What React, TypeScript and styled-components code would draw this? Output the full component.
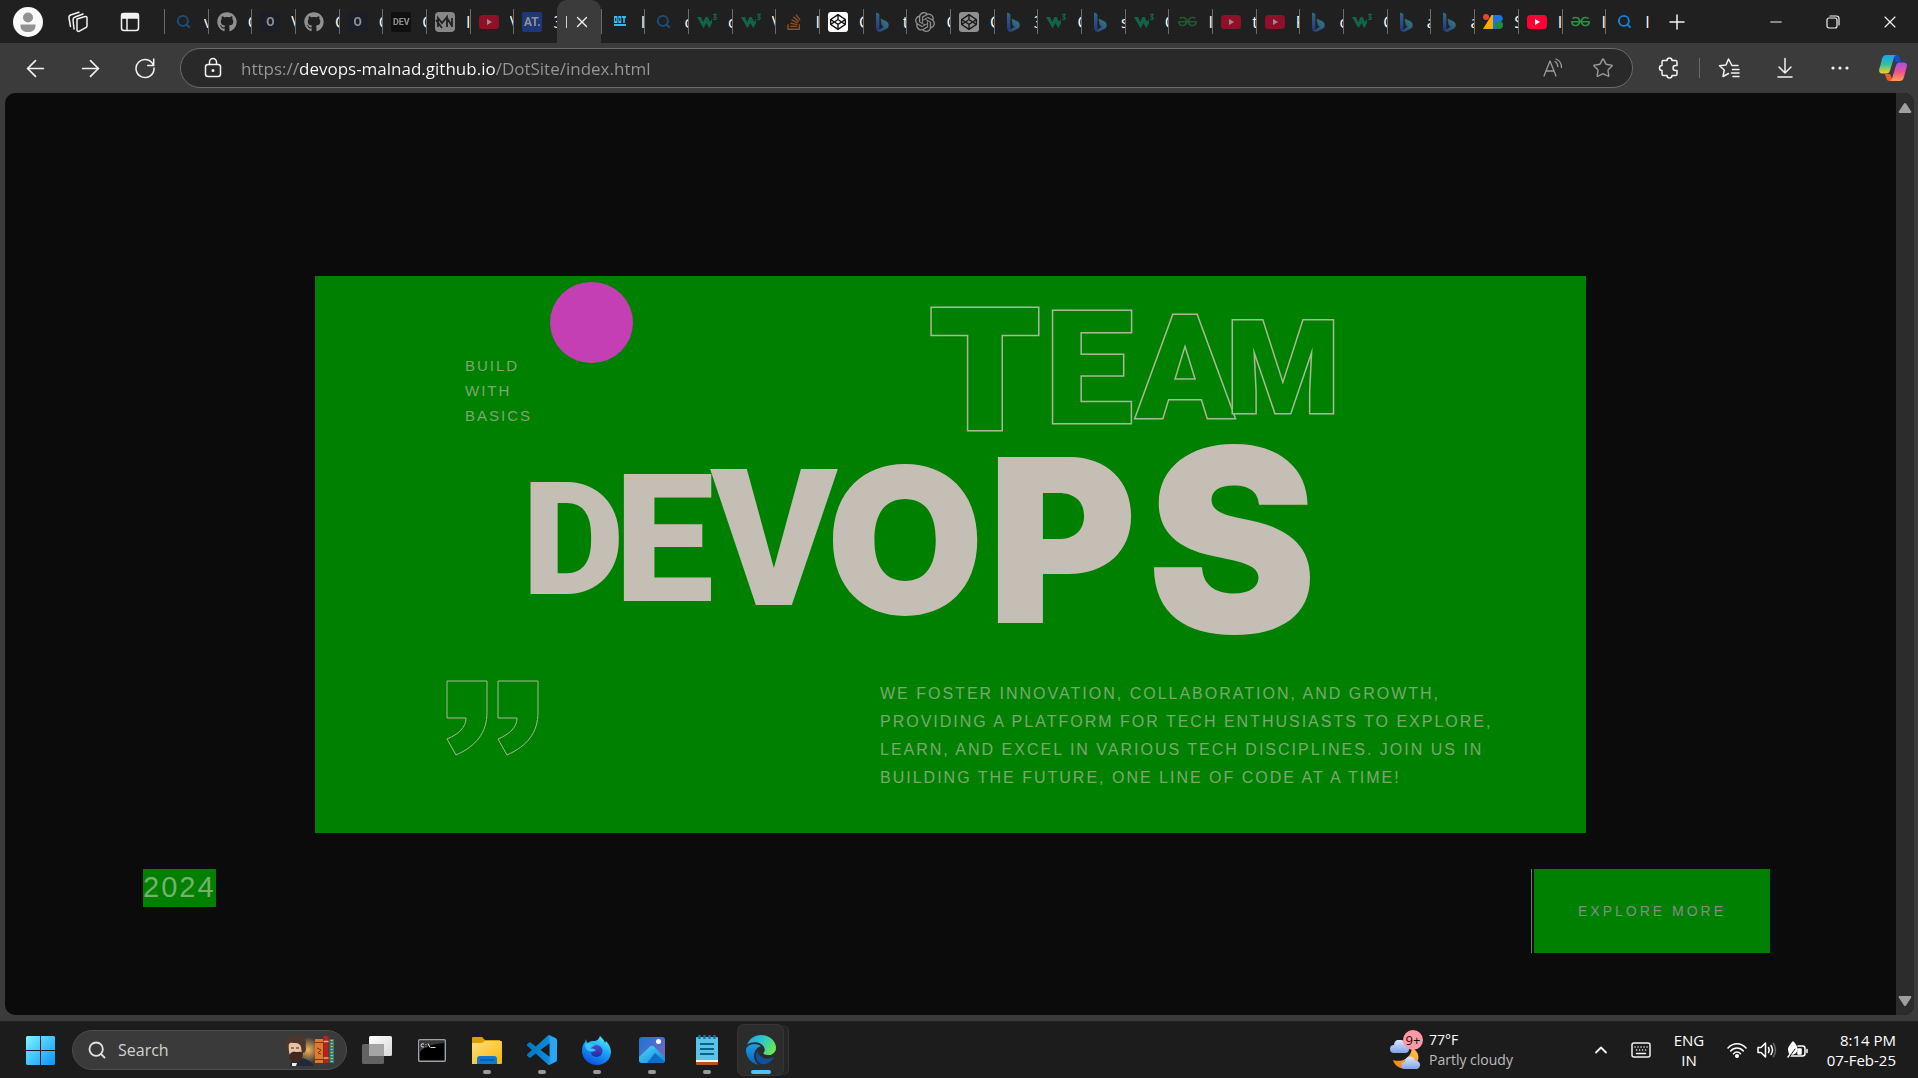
import React from "react";
import styled, { createGlobalStyle } from "styled-components";
import { FaGithub, FaStackOverflow, FaCodepen } from "react-icons/fa";
import { SiGeeksforgeeks, SiOpenai } from "react-icons/si";
import { ArrowLeft, ArrowRight, Plus, X, Minus, Star, ChevronUp, Search } from "lucide-react";

const ui = `"Open Sans", "Noto Sans", sans-serif`;
const cream = "#c5beb4";
const softCream = "#7ba86f";

const GlobalStyle = createGlobalStyle`
  *, *::before, *::after { box-sizing: border-box; }
  html, body, #root { height: 100%; }
  body { margin: 0; background: #3b3b3b; color: #fff; font-family: ${ui}; overflow: hidden; }
  button, input { font: inherit; color: inherit; border: 0; padding: 0; background: none; }
  h1, p { margin: 0; font: inherit; }
  svg { display: block; flex: none; }
`;

/* ---------- window ---------- */
const Window = styled.div`
  display: flex;
  flex-direction: column;
  height: 100%;
`;

const TabStrip = styled.header`
  display: flex;
  height: 43px;
  flex: none;
  background: #202020;
`;

const IconButton = styled.button<{ $w: number; $c?: string }>`
  width: ${(p) => p.$w}px;
  flex: none;
  display: flex;
  align-items: center;
  justify-content: center;
  color: ${(p) => p.$c ?? "#f2f2f2"};
`;

const LeftTools = styled.div`
  display: flex;
  flex: none;
  width: 164px;
`;

const Tabs = styled.nav`
  display: flex;
  flex: 1;
  min-width: 0;
`;

const Tab = styled.button<{ $dim: boolean }>`
  flex: 1 1 0;
  min-width: 0;
  display: flex;
  align-items: center;
  gap: 11px;
  padding-left: 9px;
  overflow: hidden;
  background: linear-gradient(#6b6b6b, #6b6b6b) 0 9px / 1px 25px no-repeat;
  > :first-child { opacity: ${(p) => (p.$dim ? 0.5 : 1)}; }
`;

const TabTitle = styled.span`
  width: 4px;
  overflow: hidden;
  font-size: 16px;
  line-height: 24px;
  text-align: left;
`;

const ActiveTab = styled.div`
  flex: 1 1 0;
  min-width: 0;
  display: flex;
  align-items: center;
  gap: 7px;
  padding-left: 9px;
  background: #3b3b3b;
  border-radius: 10px 10px 0 0;
`;

const ActiveTitle = styled.span`
  width: 1px;
  height: 12px;
  background: #d0d0d0;
`;

const StripEnd = styled.div`
  display: flex;
  flex: none;
  width: 269px;
  justify-content: space-between;
`;

const WindowButtons = styled.div`
  display: flex;
`;

const Favicon = styled.span`
  width: 20px;
  height: 20px;
  flex: none;
  display: flex;
  align-items: center;
  justify-content: center;
`;

const LetterIcon = styled.span<{ $bg: string; $fg: string; $size: number }>`
  width: 20px;
  height: 20px;
  border-radius: 2px;
  background: ${(p) => p.$bg};
  color: ${(p) => p.$fg};
  font: 700 ${(p) => p.$size}px/20px Roboto, sans-serif;
  text-align: center;
`;

/* ---------- toolbar ---------- */
const Toolbar = styled.div`
  display: flex;
  align-items: center;
  height: 50px;
  flex: none;
  padding-left: 8px;
`;

const AddressBar = styled.form`
  flex: 1;
  min-width: 0;
  height: 40px;
  margin: 0 6px 0 8px;
  display: flex;
  align-items: center;
  border: 1px solid #6c6c6c;
  border-radius: 20px;
  background: #292929;
  padding: 0 4px 0 6px;
`;

const UrlInput = styled.input`
  flex: 1;
  min-width: 0;
  height: 30px;
  margin-left: 2px;
  font-size: 17px;
  outline: 0;
  color: transparent;
  background: linear-gradient(to right, #989898 57px, #fff 57px, #fff 254px, #989898 254px);
  background-clip: text;
  -webkit-background-clip: text;
`;

const Divider = styled.span`
  width: 1px;
  height: 20px;
  background: #6a6a6a;
`;

/* ---------- page ---------- */
const Viewport = styled.main`
  flex: 1;
  min-height: 0;
  margin: 0 4px 6px 5px;
  display: flex;
  border-radius: 10px;
  overflow: hidden;
  background: #0b0b0b;
`;

const Page = styled.div`
  flex: 1;
  min-width: 0;
  padding: 183px 126px 0 138px;
`;

const ScrollTrack = styled.div`
  width: 18px;
  flex: none;
  display: flex;
  flex-direction: column;
  justify-content: space-between;
  align-items: center;
  padding: 9px 0 8px;
  background: #2c2c2c;
`;

const Hero = styled.section`
  margin: 0 184px 0 172px;
  padding: 6px 0 41px;
  background: #008000;
`;

const HeroTop = styled.div`
  display: flex;
  align-items: flex-start;
  height: 174px;
  padding-left: 150px;
`;

const Tagline = styled.p`
  width: 85px;
  padding-top: 71px;
  font: 15px/25px "Liberation Sans", Arial, sans-serif;
  letter-spacing: 2px;
  color: ${softCream};
`;

const Disc = styled.span`
  width: 83px;
  height: 81px;
  border-radius: 50%;
  background: #c53fb4;
`;

const Word = styled.div<{ $indent: number; $height: number; $after?: number }>`
  display: flex;
  align-items: center;
  height: ${(p) => p.$height}px;
  && { margin: 0 0 ${(p) => p.$after ?? 0}px ${(p) => p.$indent}px; }
`;

const Glyph = styled.span<{ $size: number; $w: number; $outline?: boolean; $family?: string }>`
  display: flex;
  justify-content: center;
  width: ${(p) => p.$w}px;
  font: 900 ${(p) => p.$size}px/1 ${(p) => p.$family ?? "Roboto"}, sans-serif;
  color: ${(p) => (p.$outline ? "#008000" : cream)};
  ${(p) => (p.$outline ? "-webkit-text-stroke: 3px #a9b898; paint-order: stroke fill;" : "")}
`;

const HeroBottom = styled.div`
  display: flex;
  align-items: flex-start;
  justify-content: space-between;
  padding: 0 90px 0 131px;
`;

const Blurb = styled.p`
  width: 616px;
  font: 16px/28px "Liberation Sans", Arial, sans-serif;
  letter-spacing: 2px;
  white-space: nowrap;
  color: ${softCream};
`;

const PageFooter = styled.footer`
  display: flex;
  align-items: flex-start;
  justify-content: space-between;
  margin-top: 36px;
`;

const Year = styled.p`
  font: 29px/36px "Liberation Sans", Arial, sans-serif;
  padding-bottom: 2px;
  letter-spacing: 2px;
  color: #76b06c;
  background: #008000;
`;

const ExploreFrame = styled.div`
  padding-left: 2px;
  border-left: 1px solid #777;
`;

const Explore = styled.button`
  width: 236px;
  height: 84px;
  background: #008000;
  font: 14px/20px "Liberation Sans", Arial, sans-serif;
  letter-spacing: 3px;
  color: #8a8a8a;
`;

/* ---------- taskbar ---------- */
const Taskbar = styled.footer`
  display: flex;
  align-items: center;
  height: 57px;
  flex: none;
  padding: 0 22px 0 8px;
  background: #1c1c1c;
  border-top: 1px solid #242424;
`;

const SearchBox = styled.label`
  display: flex;
  align-items: center;
  width: 275px;
  height: 40px;
  padding: 0 12px 0 14px;
  margin-right: 2px;
  border: 1px solid #4c4c4c;
  border-radius: 20px;
  background: #3a3a3a;
`;

const SearchInput = styled.input`
  flex: 1;
  min-width: 0;
  margin-left: 11px;
  font-size: 16px;
  outline: 0;
  &::placeholder { color: #d2d2d2; opacity: 1; }
`;

const TaskButton = styled.button<{ $active?: boolean }>`
  position: relative;
  width: ${(p) => (p.$active ? 45 : 55)}px;
  height: 50px;
  margin-left: ${(p) => (p.$active ? 4 : 0)}px;
  flex: none;
  display: flex;
  align-items: center;
  justify-content: center;
  border-radius: 6px;
  background: ${(p) => (p.$active ? "#2c2c2c" : "none")};
  box-shadow: ${(p) => (p.$active ? "0 0 0 1px #363636, 5px 0 0 #252525, 6px 0 0 #363636" : "none")};
`;

const RunMark = styled.span<{ $active?: boolean }>`
  position: absolute;
  bottom: 1px;
  left: 50%;
  width: ${(p) => (p.$active ? 20 : 8)}px;
  height: 4px;
  margin-left: ${(p) => (p.$active ? -10 : -4)}px;
  border-radius: 2px;
  background: ${(p) => (p.$active ? "#4cc2ff" : "#9a9a9a")};
`;

const Spacer = styled.span`
  flex: 1;
`;

const Weather = styled.button`
  display: flex;
  align-items: center;
  gap: 6px;
  width: 191px;
  text-align: left;
`;

const TwoLines = styled.span<{ $align: string; $size?: number }>`
  display: block;
  text-align: ${(p) => p.$align};
  font-size: ${(p) => p.$size ?? 14}px;
  line-height: 20px;
  white-space: nowrap;
`;

const Faded = styled.span`
  color: #bdbdbd;
`;

const LangButton = styled.button`
  width: 56px;
`;

const TrayGroup = styled.button`
  display: flex;
  align-items: center;
  justify-content: center;
  gap: 10px;
  width: 100px;
`;

const Clock = styled.button`
  display: flex;
  justify-content: flex-end;
  width: 79px;
`;

/* ---------- favicons ---------- */
const Bing = () => (
  <svg width="14" height="20" viewBox="0 0 14 20">
    <defs>
      <linearGradient id="bingA" x1="0" y1="0" x2="0" y2="1">
        <stop offset="0" stopColor="#3fb4ea" /><stop offset="1" stopColor="#2f4fd8" />
      </linearGradient>
      <linearGradient id="bingB" x1="1" y1="0" x2="0" y2="1">
        <stop offset="0" stopColor="#4fd6e0" /><stop offset="1" stopColor="#2a62dc" />
      </linearGradient>
    </defs>
    <path d="M1 .6 3.6 1.6c.5.3.8.7.8 1.3v13.4l-.6 2.2C2 18.500 1 17.400 1 15.800Z" fill="url(#bingA)" />
    <path d="m6.200 6.800 4.600 2.100c2 .9 2.900 2.500 2.900 4.300 0 1.300-.6 2.300-1.300 3l-6 3.200c-1.800.9-4 .2-4.900-1.500 1 .4 2 .1 2.900-.4l4.300-2.800-1.300-.7c-.4-.2-.6-.5-.8-.9L5.700 8c-.2-.700 0-1.200.500-1.200Z" fill="url(#bingB)" />
  </svg>
);

const W3 = () => (
  <svg width="20" height="17" viewBox="0 0 20 17" fill="none">
    <path d="M0 4h4l2.200 5L8.500 4h2.200l2.300 5 2-3v4l-2.700 5.200L9.500 10l-3 5.200Z" fill="#04aa6d" />
    <path d="M16 1.500h3L17.400 4c1.400 0 1.900.8 1.700 1.700-.2 1-1.900 1.200-2.800.3" stroke="#04aa6d" strokeWidth="1.300" />
  </svg>
);

const Windows28 = () => (
  <svg width="20" height="16" viewBox="0 0 20 16">
    <circle cx="3" cy="3" r="3" fill="#ea4335" />
    <path d="M0 15 8.500 1h1.500v14Z" fill="#f9ab00" />
    <path d="M10 1h6a3.500 3.500 0 0 1 2 6.500L14 15h-4Z" fill="#1a73e8" />
    <circle cx="16" cy="11" r="4" fill="#1e8e3e" />
  </svg>
);

const Markdown = () => (
  <svg width="20" height="20" viewBox="0 0 20 20" fill="none" stroke="#222" strokeWidth="1.800">
    <rect width="20" height="20" rx="4" fill="#eee" stroke="none" />
    <path d="M3 15V6l4 5 5-6v10M1 8l6 8M17 6v9M12 6l5 8" />
  </svg>
);

const LinkSearch = () => <Search size={15} color="#1583e0" strokeWidth={3} />;

type Kind =
  | "search" | "github" | "o" | "dev" | "md" | "yt" | "at" | "dot" | "w3" | "so"
  | "codepen" | "bing" | "gpt" | "gfg" | "28";

const FaviconFor = ({ kind }: { kind: Kind }) => {
  switch (kind) {
    case "search": return <LinkSearch />;
    case "github": return <FaGithub size={20} color="#fff" />;
    case "o": return <LetterIcon $bg="#1a1e2e" $fg="#fff" $size={12}>O</LetterIcon>;
    case "dev": return <LetterIcon $bg="#000" $fg="#fff" $size={9}>DEV</LetterIcon>;
    case "md": return <Markdown />;
    case "yt": return (
      <svg width="20" height="14" viewBox="0 0 20 14">
        <rect width="20" height="14" rx="3.500" fill="#ff0033" />
        <path d="m8 4 5 3-5 3Z" fill="#fff" />
      </svg>
    );
    case "at": return <LetterIcon $bg="#1c4fd0" $fg="#fff" $size={12}>AT.</LetterIcon>;
    case "dot": return (
      <svg width="12" height="11" viewBox="0 0 12 11" fill="#36b9ec">
        <path d="M0 0h3.500v7H0ZM4.300 0h3v7h-3ZM8 0h4v2h-1.200v5H9.200V2H8ZM0 8h12v2H0Z" />
        <path d="M1.200 2h1v3h-1ZM5.300 2h1v3h-1Z" fill="#123" />
      </svg>
    );
    case "w3": return <W3 />;
    case "so": return <FaStackOverflow size={18} color="#f48024" />;
    case "codepen": return (
      <svg width="20" height="20" viewBox="0 0 20 20">
        <rect width="20" height="20" rx="3" fill="#fff" />
        <FaCodepen x={2} y={2} size={16} color="#111" />
      </svg>
    );
    case "bing": return <Bing />;
    case "gpt": return <SiOpenai size={20} color="#fff" />;
    case "gfg": return <SiGeeksforgeeks size={19} color="#2f8d46" />;
    case "28": return <Windows28 />;
  }
};

const before: [Kind, string][] = [
  ["search", "v"], ["github", "G"], ["o", "V"], ["github", "G"], ["o", "G"],
  ["dev", "G"], ["md", "I"], ["yt", "V"], ["at", "3"],
];
const after: [Kind, string, boolean?][] = [
  ["dot", "I", true], ["search", "c"], ["w3", "c"], ["w3", "V"], ["so", "I"], ["codepen", "C", true],
  ["bing", "t"], ["gpt", "C"], ["codepen", "C"], ["bing", "3"], ["w3", "C"], ["bing", "s"],
  ["w3", "C"], ["gfg", "I"], ["yt", "t"], ["yt", "F"], ["bing", "c"], ["w3", "C"],
  ["bing", "a"], ["bing", "a"], ["28", "S", true], ["yt", "I", true], ["gfg", "I", true], ["search", "I", true],
];

const TabItem = ({ kind, title, bright }: { kind: Kind; title: string; bright?: boolean }) => (
  <Tab type="button" $dim={!bright}>
    <Favicon><FaviconFor kind={kind} /></Favicon>
    <TabTitle>{title}</TabTitle>
  </Tab>
);

/* ---------- toolbar icons ---------- */
const line = { fill: "none", stroke: "currentColor", strokeWidth: 1.5, strokeLinecap: "round", strokeLinejoin: "round" } as const;

const Profile = () => (
  <svg width="30" height="30" viewBox="0 0 30 30">
    <circle cx="15" cy="15" r="15" fill="#fafafa" />
    <circle cx="15" cy="10.500" r="5" fill="#929292" />
    <path d="M7.500 17.500h15v1.500c0 4-3.500 6-7.500 6s-7.500-2-7.500-6Z" fill="#929292" />
  </svg>
);
const Workspaces = () => (
  <svg width="22" height="22" viewBox="0 0 22 22" {...line}>
    <path d="m10 8 8-2.500a1.500 1.500 0 0 1 2 1.400v8a2 2 0 0 1-1.300 1.800L12 20.400a1.500 1.500 0 0 1-2-1.400Z" />
    <path d="M7 18 6 9c0-1.500.5-2.500 2-3l8-3M3.500 15.500 2 7c-.2-1.500.3-2.500 1.600-3L12 1.200" />
  </svg>
);
const VerticalTabs = () => (
  <svg width="20" height="20" viewBox="0 0 20 20" {...line}>
    <rect x="1.500" y="1.500" width="17" height="17" rx="2.500" />
    <path d="M2 2h16v4H2Z" fill="currentColor" />
    <path d="M7 6v12" />
  </svg>
);
const Reload = () => (
  <svg width="22" height="22" viewBox="0 0 22 22" {...line}>
    <path d="M19.500 8.500A9 9 0 1 0 20 11M19.700 2v6.500h-6" />
  </svg>
);
const Lock = () => (
  <svg width="18" height="22" viewBox="0 0 18 22" {...line}>
    <rect x="1.500" y="7.500" width="15" height="12" rx="2.500" />
    <path d="M5.500 7.500V5a3.500 3.500 0 0 1 7 0v2.500" />
    <circle cx="9" cy="13.500" r=".8" fill="currentColor" />
  </svg>
);
const ReadAloud = () => (
  <svg width="20" height="20" viewBox="0 0 20 20" {...line} strokeWidth={1.300}>
    <path d="M1 18 7 3l6 15M3 13h8M12 3.500c1.800 1 2.700 2.500 2.800 5M13 1c3.500 1.500 5.500 4.500 5.500 8.500" />
  </svg>
);
const Puzzle = () => (
  <svg width="22" height="22" viewBox="0 0 22 22" {...line}>
    <path d="M5 3.500h4a2.500 2.500 0 0 1 5 0h3.500a1.500 1.500 0 0 1 1.500 1.500v3.500h-1.500a2.500 2.500 0 0 0 0 5H19V17a1.500 1.500 0 0 1-1.500 1.500H14a2.500 2.500 0 0 1-5 0H5.500A1.500 1.500 0 0 1 4 17v-3.500a2.500 2.500 0 0 1 0-5V5a1.500 1.500 0 0 1 1-1.500Z" />
  </svg>
);
const Favorites = () => (
  <svg width="22" height="22" viewBox="0 0 22 22" {...line}>
    <path d="M20 8.500h-6L10.500 2 8 8l-6.500.8L6.300 13 5 19.500l5.500-3M14.500 12.500H21M13.500 16H21M15 19.500h6" />
  </svg>
);
const Download = () => (
  <svg width="18" height="22" viewBox="0 0 18 22" {...line}>
    <path d="M9 1.500v14M3 10l6 6 6-6M2 20h14" />
  </svg>
);
const Dots = () => (
  <svg width="18" height="4" viewBox="0 0 18 4" fill="currentColor">
    <circle cx="2" cy="2" r="1.600" /><circle cx="9" cy="2" r="1.600" /><circle cx="16" cy="2" r="1.600" />
  </svg>
);
const Copilot = () => (
  <svg width="28" height="26" viewBox="0 0 28 26">
    <defs>
      <linearGradient id="cpA" x1="0" y1="0" x2="0" y2="1">
        <stop offset="0" stopColor="#1ea0f0" /><stop offset=".5" stopColor="#30c0a0" /><stop offset="1" stopColor="#f8d020" />
      </linearGradient>
      <linearGradient id="cpB" x1="0" y1="0" x2="0" y2="1">
        <stop offset="0" stopColor="#a050f0" /><stop offset=".5" stopColor="#f05090" /><stop offset="1" stopColor="#ffa050" />
      </linearGradient>
    </defs>
    <path d="M14 0h3.500c1.800 0 2.600 1.200 3.200 3l1.300 4h-5Z" fill="#1648d8" />
    <path d="M14 26h-3.500c-1.800 0-2.600-1.200-3.200-3L6 19h5Z" fill="#f05a28" />
    <path d="M7.500 0h10c-1.300 0-2 1-2.500 2.500l-4 13c-.6 2-1.500 3-3.500 3H3c-2.500 0-3.300-2-2.800-4L3 4c.6-2.500 2-4 4.500-4Z" fill="url(#cpA)" />
    <path d="M20.500 26h-10c1.300 0 2-1 2.500-2.500l4-13c.6-2 1.500-3 3.500-3H25c2.500 0 3.300 2 2.800 4L25 22c-.6 2.500-2 4-4.500 4Z" fill="url(#cpB)" />
  </svg>
);
const Restore = () => (
  <svg width="14" height="14" viewBox="0 0 14 14" {...line} strokeWidth={1.200}>
    <rect x="1" y="3" width="10" height="10" rx="2" />
    <path d="M4 1h6.500A2.500 2.500 0 0 1 13 3.500V10" />
  </svg>
);
const ScrollArrow = ({ down }: { down?: boolean }) => (
  <svg width="14" height="12" viewBox="0 0 14 12" fill="#9f9f9f">
    <path d={down ? "M1.500 1h11q1.300.3.700 1.400L8 10.500q-1 1-2 0L.800 2.400Q.300 1.300 1.500 1Z" : "M1.500 11h11q1.300-.3.700-1.400L8 1.500q-1-1-2 0L.800 9.600Q.300 10.700 1.500 11Z"} />
  </svg>
);

const QuoteMark = () => (
  <svg width="94" height="76" viewBox="0 0 94 76" fill="none" stroke="#a9b898" strokeWidth="1">
    <path d="M1 1h40v31c0 21-11 34-31 43L1 59c12-5 19-12 19-21H1Z" />
    <path d="M52 1h40v31c0 21-11 34-31 43l-9-16c12-5 19-12 19-21H52Z" />
  </svg>
);

/* ---------- taskbar icons ---------- */
const StartLogo = () => (
  <svg width="29" height="29" viewBox="0 0 29 29">
    <defs>
      <linearGradient id="win" gradientUnits="userSpaceOnUse" x1="0" y1="0" x2="29" y2="29">
        <stop offset="0" stopColor="#7df4ff" /><stop offset="1" stopColor="#0a94fb" />
      </linearGradient>
    </defs>
    <path d="M1 0h13v14H0V1ZM15 0h13l1 1v13H15ZM0 15h14v14H1l-1-1ZM15 15h14v13l-1 1H15Z" fill="url(#win)" />
  </svg>
);
const Writer = () => (
  <svg width="50" height="31" viewBox="0 0 50 31">
    <defs>
      <radialGradient id="glow"><stop offset="0" stopColor="#f3b259" /><stop offset="1" stopColor="#f3b259" stopOpacity="0" /></radialGradient>
    </defs>
    <circle cx="24" cy="15" r="13" fill="url(#glow)" />
    <path d="M6 31c0-4 3-7 9-8 7 0 12 3 15 8Z" fill="#20283c" />
    <path d="M4 8c3-4 12-4 15 1l1 8c-1 4-3 7-7 7-5 0-8-4-8-8Z" fill="#e8c3a2" />
    <path d="M2 17C-1 13 2 11 2 8 3 3 8 0 13 0c6 0 9 4 9 8-1 3 1 5-1 9l-3 2-1-7c-1-3-3-4-5-4-3 0-6-1-7 1-1 3 0 6-3 8Z" fill="#4d372b" />
    <path d="M6 19c2-3 5-2 6-2 2 0 5-1 7 1 0 6-3 10-8 10-4 0-6-4-5-9Z" fill="#40291f" />
    <path d="M7 13h3M12 13h3" stroke="#40291f" strokeWidth="1.200" />
    <path d="M8 28h5l-1 3H8Z" fill="#eee" />
    <rect x="31" y="4" width="8" height="24" fill="#e07a26" />
    <path d="M31 7.500h8M31 24.500h8M33 13l4 2-3 3 3 1" stroke="#7a3409" fill="none" />
    <rect x="39.500" y="1" width="5" height="27" fill="#b7211f" />
    <path d="M39.500 6.500h5M39.500 23h5" stroke="#f2b04c" strokeWidth="1.500" />
    <rect x="45.500" y="4" width="4.500" height="24" fill="#2e8277" />
    <path d="M47.700 5v22" stroke="#d6c463" strokeWidth="2" strokeDasharray="1 2" />
  </svg>
);
const TaskView = () => (
  <svg width="30" height="28" viewBox="0 0 30 28">
    <defs><linearGradient id="tv" x1="0" y1="0" x2="1" y2="1"><stop offset="0" stopColor="#fff" /><stop offset="1" stopColor="#d8d8d8" /></linearGradient></defs>
    <rect x="7" width="23" height="20" rx="1.500" fill="url(#tv)" />
    <rect y="8" width="22" height="20" rx="1.500" fill="#707070" opacity=".85" />
    <path d="M7 8h15v12H7Z" fill="#a5a5a5" />
  </svg>
);
const Terminal = () => (
  <svg width="28" height="23" viewBox="0 0 28 23">
    <rect x=".7" y=".7" width="26.600" height="21.600" rx="1" fill="#000" stroke="#9aa3ad" strokeWidth="1.400" />
    <path d="M2 2h24v2C16 5 6 7 2 13Z" fill="#383838" />
    <path d="M6 5q-3-1-3 1.300T6 8M8 5v.8M8 7.500v.8M10 4.500l2 4M12.500 8.500h5" stroke="#ddd" fill="none" />
  </svg>
);
const Folder = () => (
  <svg width="30" height="27" viewBox="0 0 30 27">
    <defs><linearGradient id="fold" x1="0" y1="0" x2="1" y2="1"><stop offset="0" stopColor="#ffe07a" /><stop offset="1" stopColor="#f5b60d" /></linearGradient></defs>
    <path d="M0 1q0-1 1-1h9l3 3h15v8H0Z" fill="#dd9d06" />
    <path d="M0 6h10l3-2h16q1 0 1 1v21q0 1-1 1H0Z" fill="url(#fold)" />
    <path d="M5 27v-5q0-3 3-3h14q3 0 3 3v5Z" fill="#0f78cf" /><path d="M8 23h14" stroke="#0a4f92" strokeWidth="1.200" />
  </svg>
);
const VsCode = () => (
  <svg width="30" height="30" viewBox="0 0 24 24">
    <defs><linearGradient id="vs"><stop offset="0" stopColor="#0078c4" /><stop offset=".7" stopColor="#1088d8" /><stop offset=".8" stopColor="#2aa4f4" /></linearGradient></defs>
    <path fill="url(#vs)" d="M23.150 2.587L18.210.210a1.494 1.494 0 0 0-1.705.290l-9.460 8.630-4.120-3.128a.999.999 0 0 0-1.276.057L.327 7.261A1 1 0 0 0 .326 8.740L3.899 12 .326 15.260a1 1 0 0 0 .001 1.479L1.650 17.940a.999.999 0 0 0 1.276.057l4.120-3.128 9.460 8.630a1.492 1.492 0 0 0 1.704.290l4.942-2.377A1.500 1.500 0 0 0 24 20.060V3.939a1.500 1.500 0 0 0-.850-1.352zm-5.146 14.861L10.826 12l7.178-5.448v10.896z" />
  </svg>
);
const Firefox = () => (
  <svg width="29" height="29" viewBox="0 0 29 29">
    <defs>
      <linearGradient id="ff" x1=".8" y1="0" x2=".3" y2="1"><stop offset="0" stopColor="#5ff0ff" /><stop offset=".45" stopColor="#19a5f5" /><stop offset="1" stopColor="#0a4fe0" /></linearGradient>
      <linearGradient id="ffc" x1="0" y1="0" x2="0" y2="1"><stop offset="0" stopColor="#5a48c8" /><stop offset="1" stopColor="#1c2c9c" /></linearGradient>
    </defs>
    <path d="M18 0c3 3 4 4 5 7l1-2c3 3 5 7 5 11 0 7-6 13-14 13S0 23 0 15c0-4 1-7 3-9l1-3c0 2 1 3 2 4 2-2 4-2 6-2 3 0 5-2 6-5Z" fill="url(#ff)" />
    <circle cx="14.500" cy="15" r="6" fill="url(#ffc)" />
    <path d="M3 8c4-2 7-1 10 2-3 0-4 1-5 3 2-1 4 0 6 1-2 2-5 2-7 1-3-1-4-4-4-7Z" fill="#35c4ff" />
  </svg>
);
const Photos = () => (
  <svg width="26" height="26" viewBox="0 0 26 26">
    <defs>
      <linearGradient id="ph" x1="0" y1="0" x2="1" y2="1"><stop offset="0" stopColor="#1279d8" /><stop offset="1" stopColor="#9060b8" /></linearGradient>
      <linearGradient id="ph2" x1="0" y1="0" x2="1" y2="1"><stop offset="0" stopColor="#50d8fa" /><stop offset="1" stopColor="#0c86dc" /></linearGradient>
    </defs>
    <rect width="26" height="26" rx="3" fill="url(#ph)" />
    <path d="M0 20 11 9.500q2-1.500 4 0l11 11V23q0 3-3 3H3q-3 0-3-3Z" fill="url(#ph2)" />
    <path d="m8 26 8-10 9.500 8.500q-1 1.500-2.500 1.500Z" fill="#0a6fc8" />
    <circle cx="19.500" cy="4.500" r="2.500" fill="#fff" />
  </svg>
);
const Notepad = () => (
  <svg width="22" height="30" viewBox="0 0 22 30">
    <rect y="26" width="22" height="4" rx="1" fill="#b4561a" /><rect y="24" width="22" height="3" fill="#f4f4f4" />
    <path d="M0 3q0-1 1-1h20q1 0 1 1v22H0Z" fill="#59c4e8" />
    <path d="M4 9h14M4 14h14M4 19h14" stroke="#0b6285" strokeWidth="1.800" />
    <path d="M3.500 0v4M8.500 0v4M13.500 0v4M18.500 0v4" stroke="#0e7ba6" strokeWidth="2.400" />
  </svg>
);
const Edge = () => (
  <svg width="30" height="30" viewBox="0 0 24 24">
    <defs>
      <linearGradient id="edT" x1="0" y1=".2" x2="1" y2=".6"><stop offset="0" stopColor="#1fa8e4" /><stop offset=".5" stopColor="#30c8c8" /><stop offset="1" stopColor="#6be852" /></linearGradient>
      <linearGradient id="edL" x1="0" y1="0" x2="0" y2="1"><stop offset="0" stopColor="#1b9de2" /><stop offset="1" stopColor="#0d62c0" /></linearGradient>
    </defs>
    <path d="M21.860 17.860q.14 0 .25.12.1.13.1.25t-.11.33l-.32.46-.43.53-.44.5q-.26.25-.38.37l-.22.23q-.58.53-1.340 1.040-.76.51-1.600.91-.86.4-1.740.64t-1.670.24q-.9 0-1.690-.28-.8-.28-1.480-.78-.68-.5-1.220-1.170-.53-.66-.92-1.440-.38-.77-.58-1.600-.2-.83-.2-1.670 0-1 .32-1.960.33-.97.87-1.800.14.95.55 1.770.41.82 1.020 1.500.6.68 1.380 1.210.78.54 1.640.9.86.36 1.770.56.92.2 1.800.2 1.120 0 2.180-.24 1.060-.23 2.060-.72l.2-.1.2-.05z" fill="#10509c" />
    <path d="M6.360 16.590q0 1.100.27 2.150.27 1.060.78 2.030.51.96 1.240 1.770.74.82 1.660 1.400-1.470-.2-2.800-.74-1.330-.55-2.480-1.370-1.150-.83-2.080-1.900-.92-1.070-1.580-2.330T.36 14.940Q0 13.540 0 12.060q0-.81.32-1.490.31-.68.83-1.230.53-.55 1.200-.96.66-.4 1.350-.66.74-.27 1.500-.39.78-.12 1.550-.12.7 0 1.420.1.72.12 1.400.35.68.23 1.320.57.63.35 1.160.83-.35 0-.7.07-.33.07-.65.23v-.02q-.63.28-1.200.74-.57.46-1.050 1.040-.48.58-.87 1.260-.38.67-.65 1.390-.27.71-.42 1.440-.15.72-.15 1.380z" fill="url(#edL)" />
    <path d="M11.960.06q1.700 0 3.330.39 1.630.38 3.070 1.150 1.430.77 2.620 1.930 1.180 1.160 1.980 2.700.49.94.76 1.960.28 1 .28 2.080 0 .89-.23 1.700-.24.8-.69 1.480-.45.68-1.100 1.220-.64.53-1.450.88-.54.24-1.110.36-.58.13-1.160.13-.42 0-.97-.03-.54-.03-1.100-.12-.55-.1-1.050-.28-.5-.19-.84-.5-.12-.09-.23-.24-.1-.16-.1-.33 0-.15.16-.35.16-.2.35-.5.2-.28.36-.68.16-.4.16-.95 0-1.060-.4-1.960-.4-.91-1.060-1.640-.66-.74-1.520-1.280-.86-.55-1.790-.89-.84-.3-1.720-.44-.87-.14-1.760-.14-1.550 0-3.060.45T.94 7.550q.71-1.740 1.810-3.130 1.100-1.380 2.520-2.350Q6.680 1.100 8.370.58q1.700-.52 3.580-.52Z" fill="url(#edT)" />
  </svg>
);

const WeatherArt = styled.span`
  position: relative;
  width: 33px;
  height: 40px;
  flex: none;
  display: flex;
  align-items: flex-end;
`;
const Badge = styled.span`
  position: absolute;
  top: 0;
  right: 0;
  width: 20px;
  height: 20px;
  border-radius: 50%;
  background: #ff99a4;
  color: #111;
  font-size: 13px;
  line-height: 20px;
  text-align: center;
`;
const Moon = () => (
  <svg width="31" height="30" viewBox="0 0 31 30">
    <defs>
      <linearGradient id="mn" x1="0" y1="1" x2="1" y2="0"><stop offset="0" stopColor="#f07818" /><stop offset="1" stopColor="#ffc848" /></linearGradient>
      <linearGradient id="cl" x1="0" y1="0" x2="0" y2="1"><stop offset="0" stopColor="#dce9ff" /><stop offset="1" stopColor="#7fa4e8" /></linearGradient>
    </defs>
    <path d="M3 20c9 3 18-2 19-12 8 4 8 12 3 17C18 32 5 29 3 20Z" fill="url(#mn)" />
    <path d="M4 13a4 4 0 0 1 0-8 5.500 5.500 0 0 1 11 0 4 4 0 0 1 0 8Z" fill="url(#cl)" />
    <path d="M15 29a3.500 3.500 0 0 1 0-7 5 5 0 0 1 10-1 4 4 0 0 1 2 8Z" fill="url(#cl)" />
  </svg>
);
const Keyboard = () => (
  <svg width="20" height="16" viewBox="0 0 20 16" {...line}>
    <rect x="1" y="1" width="18" height="14" rx="2" />
    <path d="M4 5h.1M7 5h.1M10 5h.1M13 5h.1M16 5h.1M5.500 8h.1M8.500 8h.1M11.500 8h.1M14.500 8h.1M5.500 11.500h9" />
  </svg>
);
const Wifi = () => (
  <svg width="20" height="16" viewBox="0 0 20 16" {...line}>
    <path d="M1 6C6 .3 14 .3 19 6M3.700 9C7.200 5 12.800 5 16.300 9M6.500 11.700c2-2.200 5-2.200 7 0" />
    <circle cx="10" cy="14" r="1.300" fill="currentColor" />
  </svg>
);
const Volume = () => (
  <svg width="20" height="18" viewBox="0 0 20 18" {...line}>
    <path d="M1 6.500h3L8.500 2v14L4 11.500H1ZM11.500 6.500q1.500 2.500 0 5M14 4.500q3 4.500 0 9" />
    <path d="M16.500 2.500q4 6.500 0 13" stroke="#666" />
  </svg>
);
const Battery = () => (
  <svg width="21" height="18" viewBox="0 0 21 18" {...line}>
    <path d="M11 5h4.500A2.500 2.500 0 0 1 18 7.500v5a2.500 2.500 0 0 1-2.500 2.500H4M20 8.500v3" />
    <path d="M1 16c2-3 4-5 7-7M3 13C0 7 3 5 6 1c5 5 5 10 0 12Z" fill="currentColor" />
    <path d="M11 13V8h3v5Z" fill="currentColor" />
    <path d="M3 15 8 8" stroke="#1c1c1c" strokeWidth="1" />
  </svg>
);

const apps: { name: string; Icon: () => React.JSX.Element; running: boolean }[] = [
  { name: "Task view", Icon: TaskView, running: false },
  { name: "Command Prompt", Icon: Terminal, running: false },
  { name: "File Explorer", Icon: Folder, running: true },
  { name: "Visual Studio Code", Icon: VsCode, running: true },
  { name: "Firefox", Icon: Firefox, running: true },
  { name: "Photos", Icon: Photos, running: true },
  { name: "Notepad", Icon: Notepad, running: true },
];

type Letter = { ch: string; size: number; w: number; family?: string };
const team: Letter[] = [
  { ch: "T", size: 168, w: 116, family: "Inter" }, { ch: "E", size: 158, w: 92 },
  { ch: "A", size: 144, w: 100 }, { ch: "M", size: 130, w: 96 },
];
const devops: Letter[] = [
  { ch: "D", size: 158, w: 86 }, { ch: "E", size: 178, w: 96 }, { ch: "V", size: 192, w: 124 },
  { ch: "O", size: 204, w: 138, family: "Inter" }, { ch: "P", size: 228, w: 176, family: "Inter" },
  { ch: "S", size: 256, w: 164, family: "Inter" },
];

export default function App() {
  return (
    <Window>
      <GlobalStyle />
      <TabStrip>
        <LeftTools>
          <IconButton $w={56} aria-label="Profile"><Profile /></IconButton>
          <IconButton $w={44} aria-label="Workspaces"><Workspaces /></IconButton>
          <IconButton $w={60} aria-label="Tab actions"><VerticalTabs /></IconButton>
        </LeftTools>
        <Tabs aria-label="Tabs">
          {before.map(([k, t], i) => <TabItem key={i} kind={k} title={t} />)}
          <ActiveTab>
            <ActiveTitle />
            <IconButton $w={16} aria-label="Close tab"><X size={18} strokeWidth={1.800} /></IconButton>
          </ActiveTab>
          {after.map(([k, t, b], i) => <TabItem key={i} kind={k} title={t} bright={b} />)}
        </Tabs>
        <StripEnd>
          <IconButton $w={56} aria-label="New tab"><Plus size={24} strokeWidth={1.500} /></IconButton>
          <WindowButtons>
            <IconButton $w={57} aria-label="Minimize"><Minus size={18} strokeWidth={1.500} /></IconButton>
            <IconButton $w={57} aria-label="Restore"><Restore /></IconButton>
            <IconButton $w={57} aria-label="Close"><X size={20} strokeWidth={1.400} /></IconButton>
          </WindowButtons>
        </StripEnd>
      </TabStrip>

      <Toolbar>
        <IconButton $w={54} aria-label="Back"><ArrowLeft size={27} strokeWidth={1.500} /></IconButton>
        <IconButton $w={56} aria-label="Forward"><ArrowRight size={27} strokeWidth={1.500} /></IconButton>
        <IconButton $w={54} aria-label="Refresh"><Reload /></IconButton>
        <AddressBar onSubmit={(e) => e.preventDefault()}>
          <IconButton $w={52} type="button" aria-label="Site information"><Lock /></IconButton>
          <UrlInput aria-label="Address" defaultValue="https://devops-malnad.github.io/DotSite/index.html" />
          <IconButton $w={50} $c="#9c9c9c" type="button" aria-label="Read aloud"><ReadAloud /></IconButton>
          <IconButton $w={50} $c="#9c9c9c" type="button" aria-label="Add to favorites"><Star size={22} strokeWidth={1.500} /></IconButton>
        </AddressBar>
        <IconButton $w={60} aria-label="Extensions"><Puzzle /></IconButton>
        <Divider />
        <IconButton $w={58} aria-label="Favorites"><Favorites /></IconButton>
        <IconButton $w={54} aria-label="Downloads"><Download /></IconButton>
        <IconButton $w={56} aria-label="More"><Dots /></IconButton>
        <IconButton $w={50} aria-label="Copilot"><Copilot /></IconButton>
      </Toolbar>

      <Viewport>
        <Page>
          <Hero>
            <HeroTop>
              <Tagline>BUILD<br />WITH<br />BASICS</Tagline>
              <Disc />
              <Word $indent={294} $height={174}>
                {team.map((l) => <Glyph key={l.ch} $size={l.size} $w={l.w} $family={l.family} $outline>{l.ch}</Glyph>)}
              </Word>
            </HeroTop>
            <Word as="h1" $indent={215} $height={168} $after={56}>
              {devops.map((l) => <Glyph key={l.ch} $size={l.size} $w={l.w} $family={l.family}>{l.ch}</Glyph>)}
            </Word>
            <HeroBottom>
              <QuoteMark />
              <Blurb>
                WE FOSTER INNOVATION, COLLABORATION, AND GROWTH,<br />
                PROVIDING A PLATFORM FOR TECH ENTHUSIASTS TO EXPLORE,<br />
                LEARN, AND EXCEL IN VARIOUS TECH DISCIPLINES. JOIN US IN<br />
                BUILDING THE FUTURE, ONE LINE OF CODE AT A TIME!
              </Blurb>
            </HeroBottom>
          </Hero>
          <PageFooter>
            <Year>2024</Year>
            <ExploreFrame><Explore>EXPLORE MORE</Explore></ExploreFrame>
          </PageFooter>
        </Page>
        <ScrollTrack aria-hidden><ScrollArrow /><ScrollArrow down /></ScrollTrack>
      </Viewport>

      <Taskbar>
        <IconButton $w={64} aria-label="Start"><StartLogo /></IconButton>
        <SearchBox>
          <Search size={20} color="#e0e0e0" strokeWidth={2.200} />
          <SearchInput placeholder="Search" aria-label="Search" />
          <Writer />
        </SearchBox>
        {apps.map(({ name, Icon, running }) => (
          <TaskButton key={name} aria-label={name}>
            <Icon />
            {running && <RunMark />}
          </TaskButton>
        ))}
        <TaskButton $active aria-label="Microsoft Edge"><Edge /><RunMark $active /></TaskButton>
        <Spacer />
        <Weather>
          <WeatherArt><Moon /><Badge>9+</Badge></WeatherArt>
          <TwoLines $align="left">77°F<br /><Faded>Partly cloudy</Faded></TwoLines>
        </Weather>
        <IconButton $w={40} aria-label="Show hidden icons"><ChevronUp size={20} strokeWidth={2.200} /></IconButton>
        <IconButton $w={40} aria-label="Touch keyboard"><Keyboard /></IconButton>
        <LangButton><TwoLines $align="center" $size={15}>ENG<br />IN</TwoLines></LangButton>
        <TrayGroup aria-label="Network, volume, battery"><Wifi /><Volume /><Battery /></TrayGroup>
        <Clock><TwoLines $align="right" $size={15}>8:14 PM<br />07-Feb-25</TwoLines></Clock>
      </Taskbar>
    </Window>
  );
}
